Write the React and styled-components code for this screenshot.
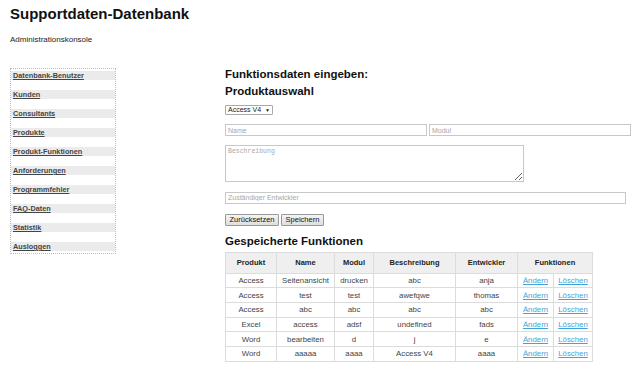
import React from "react";
import styled, { createGlobalStyle } from "styled-components";

const GlobalStyle = createGlobalStyle`
  html, body {
    margin: 0;
    padding: 0;
    background: #fff;
  }
  body {
    font-family: "Liberation Sans", Arial, sans-serif;
    color: #333;
  }
`;

const Page = styled.div`
  width: 640px;
  height: 365px;
  overflow: hidden;
  box-sizing: border-box;
  padding: 5px 0 0 10px;
`;

const Title = styled.h1`
  margin: 0;
  font-size: 15px;
  line-height: 17px;
  font-weight: bold;
  color: #111;
`;

const Subtitle = styled.p`
  margin: 13px 0 0;
  font-size: 8px;
  line-height: 9px;
  color: #222;
`;

const Layout = styled.div`
  display: flex;
  align-items: flex-start;
  margin-top: 24px;
`;

const Sidebar = styled.ul`
  list-style: none;
  margin: 0;
  padding: 2px 0;
  width: 106px;
  box-sizing: border-box;
  border: 1px dotted #bdbdbd;
  display: flex;
  flex-direction: column;
  gap: 10px;
`;

const NavItem = styled.li`
  background: #ebebeb;
  height: 9px;
  font-size: 7.3px;
  line-height: 9px;
  padding-left: 2px;
`;

const NavLink = styled.a`
  font-weight: bold;
  color: #444;
  text-decoration: underline;
`;

const Main = styled.main`
  margin-left: 109px;
  width: 406px;
`;

const Heading = styled.h2`
  margin: ${p => p.$top || 0}px 0 0;
  font-size: 11.5px;
  line-height: 13px;
  font-weight: bold;
  color: #111;
`;

const SelectBox = styled.label`
  display: inline-flex;
  align-items: center;
  gap: 3px;
  margin-top: 6.5px;
  height: 10px;
  padding: 0 2px;
  border: 1px solid #a9a9a9;
  border-radius: 1px;
  box-sizing: border-box;
  background: #fff;
`;

const Select = styled.select`
  appearance: none;
  border: 0;
  padding: 0;
  margin: 0;
  background: transparent;
  font-family: "Liberation Sans", Arial, sans-serif;
  font-size: 7px;
  line-height: 8px;
  color: #222;
  outline: none;
`;

const Arrow = styled.span`
  font-size: 5px;
  color: #222;
`;

const Row = styled.div`
  display: flex;
  gap: 2px;
  margin-top: ${p => p.$top || 0}px;
`;

const Input = styled.input`
  box-sizing: border-box;
  height: 12px;
  width: ${p => (p.$width ? `${p.$width}px` : "auto")};
  flex: ${p => (p.$grow ? 1 : "none")};
  min-width: 0;
  margin: 0;
  padding: 0 2px;
  border: 1px solid #c8c8c8;
  font-family: "Liberation Sans", Arial, sans-serif;
  font-size: 7px;
  color: #333;
  &::placeholder {
    color: #a8a8a8;
  }
`;

const TextArea = styled.textarea`
  display: block;
  box-sizing: border-box;
  width: 299px;
  height: 36.5px;
  margin: 9px 0 0;
  padding: 2px;
  border: 1px solid #c8c8c8;
  font-family: "Liberation Mono", "DejaVu Sans Mono", monospace;
  font-size: 6.5px;
  &::placeholder {
    color: #a8a8a8;
  }
`;

const Buttons = styled.div`
  display: flex;
  gap: 2px;
  margin-top: 10px;
`;

const Button = styled.button`
  height: 12px;
  box-sizing: border-box;
  padding: 0 3.5px;
  border: 1px solid #9a9a9a;
  border-radius: 1px;
  background: linear-gradient(#f4f4f4, #dedede);
  font-family: "Liberation Sans", Arial, sans-serif;
  font-size: 7.5px;
  line-height: 10px;
  color: #111;
`;

const Table = styled.table`
  margin-top: 4px;
  border-collapse: collapse;
  table-layout: fixed;
  width: 367px;
  font-size: 7.8px;
  color: #444;
`;

const Col = styled.col`
  width: ${p => p.$w}px;
`;

const Th = styled.th`
  height: 20px;
  padding: 0;
  background: #efefef;
  border: 1px solid #dcdcdc;
  font-size: 7.5px;
  font-weight: bold;
  color: #222;
  text-align: center;
`;

const Td = styled.td`
  height: 14.7px;
  padding: 0;
  border: 1px solid #dcdcdc;
  text-align: center;
  white-space: nowrap;
  box-sizing: border-box;
`;

const Link = styled.a`
  color: #42a3d8;
  text-decoration: underline;
`;

const navItems = [
  "Datenbank-Benutzer",
  "Kunden",
  "Consultants",
  "Produkte",
  "Produkt-Funktionen",
  "Anforderungen",
  "Programmfehler",
  "FAQ-Daten",
  "Statistik",
  "Ausloggen",
];

const rows = [
  ["Access", "Seitenansicht", "drucken", "abc", "anja"],
  ["Access", "test", "test", "awefqwe", "thomas"],
  ["Access", "abc", "abc", "abc", "abc"],
  ["Excel", "access", "adsf", "undefined", "fads"],
  ["Word", "bearbeiten", "d", "j", "e"],
  ["Word", "aaaaa", "aaaa", "Access V4", "aaaa"],
];

export default function App() {
  return (
    <>
      <GlobalStyle />
      <Page>
        <Title>Supportdaten-Datenbank</Title>
        <Subtitle>Administrationskonsole</Subtitle>
        <Layout>
          <Sidebar>
            {navItems.map(item => (
              <NavItem key={item}>
                <NavLink href="#">{item}</NavLink>
              </NavItem>
            ))}
          </Sidebar>
          <Main>
            <Heading>Funktionsdaten eingeben:</Heading>
            <Heading $top={4}>Produktauswahl</Heading>
            <SelectBox>
              <Select defaultValue="Access V4">
                <option>Access V4</option>
                <option>Excel</option>
                <option>Word</option>
              </Select>
              <Arrow>▼</Arrow>
            </SelectBox>
            <Row $top={8}>
              <Input $grow placeholder="Name" />
              <Input $grow placeholder="Modul" />
            </Row>
            <TextArea placeholder="Beschreibung" />
            <Row $top={10}>
              <Input $width={401} placeholder="Zuständiger Entwickler" />
            </Row>
            <Buttons>
              <Button type="reset">Zurücksetzen</Button>
              <Button type="submit">Speichern</Button>
            </Buttons>
            <Heading $top={9}>Gespeicherte Funktionen</Heading>
            <Table>
              <colgroup>
                <Col $w={51} />
                <Col $w={58} />
                <Col $w={39} />
                <Col $w={82} />
                <Col $w={62} />
                <Col $w={36} />
                <Col $w={39} />
              </colgroup>
              <thead>
                <tr>
                  <Th>Produkt</Th>
                  <Th>Name</Th>
                  <Th>Modul</Th>
                  <Th>Beschreibung</Th>
                  <Th>Entwickler</Th>
                  <Th colSpan={2}>Funktionen</Th>
                </tr>
              </thead>
              <tbody>
                {rows.map((r, i) => (
                  <tr key={i}>
                    {r.map((c, j) => (
                      <Td key={j}>{c}</Td>
                    ))}
                    <Td>
                      <Link href="#">Ändern</Link>
                    </Td>
                    <Td>
                      <Link href="#">Löschen</Link>
                    </Td>
                  </tr>
                ))}
              </tbody>
            </Table>
          </Main>
        </Layout>
      </Page>
    </>
  );
}
